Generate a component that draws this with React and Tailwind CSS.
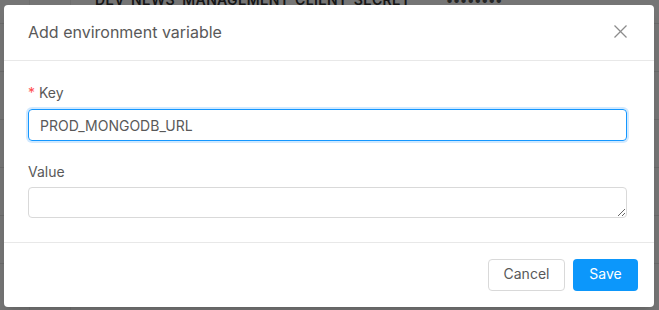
import React, { useState } from 'react'

const rows = [
  { key: 'DEV_NEWS_MANAGEMENT_CLIENT_SECRET', value: '••••••••' },
  { key: 'DEV_PAYMENTS_API_KEY', value: '••••••••' },
  { key: 'DEV_REDIS_HOST', value: '••••••••' },
  { key: 'DEV_SMTP_PASSWORD', value: '••••••••' },
  { key: 'DEV_SENTRY_DSN', value: '••••••••' },
  { key: 'DEV_JWT_SECRET', value: '••••••••' },
  { key: 'DEV_MONGODB_URL', value: '••••••••' },
]

const App = () => {
  const [key, setKey] = useState('PROD_MONGODB_URL')
  const [value, setValue] = useState('')

  return (
    <div className="relative h-[310px] w-[659px] overflow-hidden bg-white" style={{ fontFamily: 'Inter, "Noto Sans", sans-serif' }}>
      {/* Page behind the modal */}
      <div className="-mt-[24px] flex flex-col">
        {rows.map((r) => (
          <div key={r.key} className="flex h-[48px] items-center border-b border-[#e8e8e8] text-[14px] font-semibold text-[#333]">
            <div className="h-full w-[30px] border-r border-[#f0f0f0]" />
            <div className="h-full w-[41px] border-r border-[#f0f0f0]" />
            <div className="w-[355px] pl-[24px] tracking-wide">{r.key}</div>
            <div className="pl-[20px] text-[#555]">{r.value}</div>
          </div>
        ))}
      </div>

      {/* Mask */}
      <div className="absolute inset-0 bg-black/[0.54]" />

      {/* Modal */}
      <div className="absolute left-[4px] top-[5px] flex w-[650px] flex-col rounded-[4px] bg-white shadow-lg">
        <div className="flex h-[56px] items-center justify-between border-b border-[#e8e8e8] px-[24px] pb-[2px]">
          <span className="text-[16px] text-[#595959]">Add environment variable</span>
          <button className="flex h-[20px] w-[20px] items-center justify-center text-[#8c8c8c]">
            <svg width="13" height="13" viewBox="0 0 13 13" fill="none" stroke="currentColor" strokeWidth="1.3">
              <line x1="0.5" y1="0.5" x2="12.5" y2="12.5" />
              <line x1="12.5" y1="0.5" x2="0.5" y2="12.5" />
            </svg>
          </button>
        </div>

        <div className="flex flex-col px-[24px] pt-[24px] pb-[24px]">
          <label className="flex h-[24px] items-start text-[14px] leading-[16px] text-[#595959]">
            <span className="mr-[4px] text-[#ff4d4f]">*</span>Key
          </label>
          <input
            value={key}
            onChange={(e) => setKey(e.target.value)}
            className="h-[32px] w-[599px] rounded-[4px] border border-[#1497ff] px-[11px] text-[14px] text-[#595959] outline-none shadow-[0_0_0_2px_rgba(24,144,255,0.2)]"
          />
          <label className="mt-[24px] flex h-[22px] items-start text-[14px] leading-[14px] text-[#595959]">Value</label>
          <textarea
            value={value}
            onChange={(e) => setValue(e.target.value)}
            rows={1}
            className="h-[31px] w-[599px] rounded-[4px] border border-[#d9d9d9] px-[11px] py-[4px] text-[14px] text-[#595959] outline-none"
          />
        </div>

        <div className="flex h-[65px] items-center justify-end gap-[8px] border-t border-[#e8e8e8] px-[16px]">
          <button className="h-[32px] w-[77px] rounded-[4px] border border-[#d9d9d9] bg-white pb-[3px] text-[14px] text-[#595959]">
            Cancel
          </button>
          <button className="h-[32px] w-[65px] rounded-[4px] bg-[#0c97fb] pb-[3px] text-[14px] text-white">
            Save
          </button>
        </div>
      </div>
    </div>
  )
}

export default App
